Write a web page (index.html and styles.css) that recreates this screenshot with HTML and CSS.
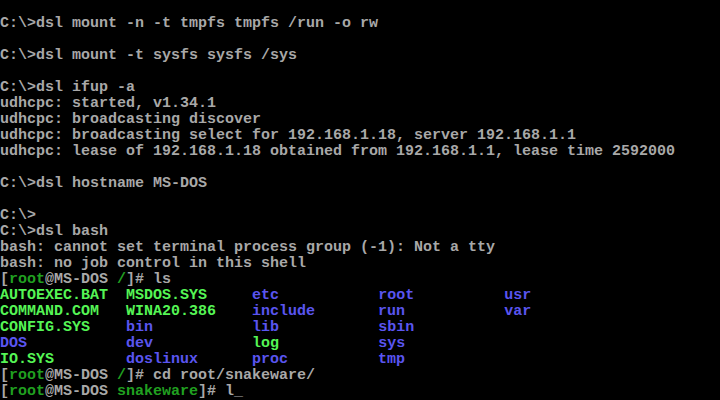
FILE: index.html
```html
<!DOCTYPE html>
<html>
<head>
<meta charset="utf-8">
<link rel="stylesheet" href="styles.css">
</head>
<body>
<pre class="term">
C:\&gt;dsl mount -n -t tmpfs tmpfs /run -o rw

C:\&gt;dsl mount -t sysfs sysfs /sys

C:\&gt;dsl ifup -a
udhcpc: started, v1.34.1
udhcpc: broadcasting discover
udhcpc: broadcasting select for 192.168.1.18, server 192.168.1.1
udhcpc: lease of 192.168.1.18 obtained from 192.168.1.1, lease time 2592000

C:\&gt;dsl hostname MS-DOS

C:\&gt;
C:\&gt;dsl bash
bash: cannot set terminal process group (-1): Not a tty
bash: no job control in this shell
[<span class="dg">root</span>@MS-DOS <span class="dg">/</span>]# ls
<span class="fg">AUTOEXEC.BAT</span>  <span class="fg">MSDOS.SYS</span>     <span class="dir">etc</span>           <span class="dir">root</span>          <span class="dir">usr</span>
<span class="fg">COMMAND.COM</span>   <span class="fg">WINA20.386</span>    <span class="dir">include</span>       <span class="dir">run</span>           <span class="dir">var</span>
<span class="fg">CONFIG.SYS</span>    <span class="dir">bin</span>           <span class="dir">lib</span>           <span class="dir">sbin</span>
<span class="dir">DOS</span>           <span class="dir">dev</span>           <span class="fg">log</span>           <span class="dir">sys</span>
<span class="fg">IO.SYS</span>        <span class="dir">doslinux</span>      <span class="dir">proc</span>          <span class="dir">tmp</span>
[<span class="dg">root</span>@MS-DOS <span class="dg">/</span>]# cd root/snakeware/
[<span class="dg">root</span>@MS-DOS <span class="dg">snakeware</span>]# l<span class="cursor">_</span></pre>
</body>
</html>
```
FILE: styles.css
```css
html, body {
  margin: 0;
  padding: 0;
  background: #000;
  width: 720px;
  height: 400px;
  overflow: hidden;
}
.term {
  margin: 0;
  padding: 16px 0 0 0;
  font-family: "Liberation Mono", monospace;
  font-size: 15px;
  font-weight: bold;
  line-height: 16px;
  color: #a8a8a8;
  white-space: pre;
}
.fg { color: #55f555; }
.dir { color: #5a55f0; }
.dg { color: #20a020; }
.cursor { color: #a8a8a8; }
```
